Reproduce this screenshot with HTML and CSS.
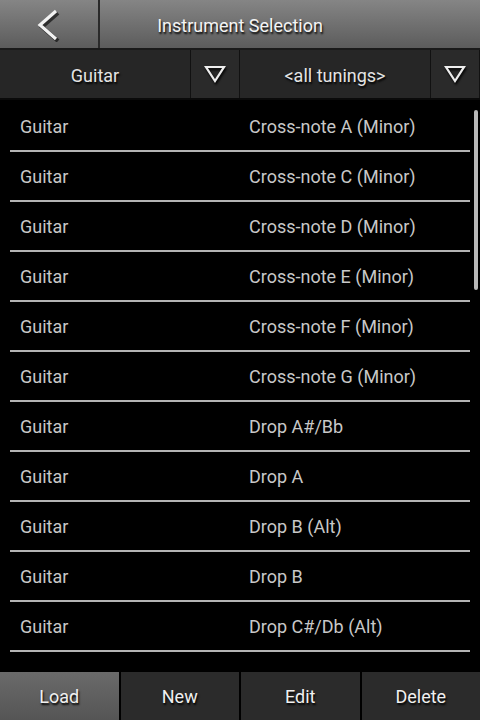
FILE: index.html
```html
<!DOCTYPE html>
<html>

<head>
    <title>Instrument Selection</title>
    <link rel="stylesheet" href="styles.css">
</head>

<body>
    <div class="header">
        <div class="back-btn">
            <svg width="30" height="34" viewBox="0 0 30 34">
                <polyline points="24,3 8,17 24,31" fill="none" stroke="#111" stroke-width="4" transform="translate(2,2)" opacity="0.7"/>
                <polyline points="24,3 8,17 24,31" fill="none" stroke="#f2f2f2" stroke-width="3.2"/>
            </svg>
        </div>
        <div class="title">Instrument Selection</div>
    </div>

    <div class="filters">
        <div class="filter-value">Guitar</div>
        <div class="filter-arrow">
            <svg width="22" height="18" viewBox="0 0 22 18"><polygon points="2,2 20,2 11,16" fill="none" stroke="#eee" stroke-width="2.2" stroke-linejoin="miter"/></svg>
        </div>
        <div class="filter-value">&lt;all tunings&gt;</div>
        <div class="filter-arrow">
            <svg width="22" height="18" viewBox="0 0 22 18"><polygon points="2,2 20,2 11,16" fill="none" stroke="#eee" stroke-width="2.2" stroke-linejoin="miter"/></svg>
        </div>
    </div>

    <div class="list-wrap">
        <ul id="tuning-list" class="tuning-list"></ul>
        <div class="scrollbar"></div>
    </div>

    <div class="toolbar">
        <button class="tool-btn active">Load</button>
        <button class="tool-btn">New</button>
        <button class="tool-btn">Edit</button>
        <button class="tool-btn">Delete</button>
    </div>

    <script>
        const tunings = [
            'Cross-note A (Minor)',
            'Cross-note C (Minor)',
            'Cross-note D (Minor)',
            'Cross-note E (Minor)',
            'Cross-note F (Minor)',
            'Cross-note G (Minor)',
            'Drop A#/Bb',
            'Drop A',
            'Drop B (Alt)',
            'Drop B',
            'Drop C#/Db (Alt)'
        ];
        const tuningList = document.getElementById('tuning-list');
        tunings.forEach(name => {
            const item = document.createElement('li');
            const inst = document.createElement('span');
            inst.className = 'col-inst';
            inst.textContent = 'Guitar';
            const tun = document.createElement('span');
            tun.className = 'col-tuning';
            tun.textContent = name;
            item.appendChild(inst);
            item.appendChild(tun);
            tuningList.appendChild(item);
        });
    </script>
</body>

</html>
```

FILE: styles.css
```css
body {
    background-color: #000;
    font-family: Roboto, "Liberation Sans", sans-serif;
    margin: 0;
    padding: 0;
    width: 480px;
    height: 720px;
    overflow: hidden;
    display: flex;
    flex-direction: column;
}

.header {
    display: flex;
    height: 48px;
    border-bottom: 2px solid #1a1a1a;
    background: linear-gradient(#858585, #5c5c5c);
}

.back-btn {
    width: 98px;
    border-right: 2px solid #2a2a2a;
    display: flex;
    align-items: center;
    justify-content: center;
}

.back-btn svg {
    margin-right: 4px;
    margin-top: 2px;
}

.title {
    flex: 1;
    display: flex;
    align-items: center;
    justify-content: center;
    padding-right: 100px;
    padding-top: 2px;
    color: #f4f4f4;
    font-size: 18px;
    text-shadow: 1px 2px 2px #000;
}

.filters {
    display: flex;
    height: 48px;
    background-color: #262626;
    border-bottom: 2px solid #0a0a0a;
}

.filter-value {
    width: 190px;
    display: flex;
    align-items: center;
    justify-content: center;
    padding-top: 2px;
    color: #e4e4e4;
    font-size: 18px;
    text-shadow: 1px 2px 2px #000;
    border-right: 1px solid #111;
}

.filter-arrow {
    width: 48px;
    display: flex;
    align-items: center;
    justify-content: center;
    border-right: 1px solid #111;
    background-color: #2a2a2a;
}

.filter-arrow svg {
    filter: drop-shadow(1px 2px 1px #000);
}

.list-wrap {
    flex: 1;
    position: relative;
    overflow: hidden;
}

.tuning-list {
    list-style: none;
    margin: 0;
    padding: 2px 10px 0;
}

.tuning-list li {
    display: flex;
    align-items: center;
    height: 48px;
    border-bottom: 2px solid #b4b4b4;
    color: #c8c8c8;
    font-size: 18px;
}

.col-inst {
    width: 229px;
    padding-left: 10px;
}

.scrollbar {
    position: absolute;
    right: 2px;
    top: 10px;
    width: 4px;
    height: 180px;
    border-radius: 2px;
    background-color: #b8b8b8;
}

.toolbar {
    display: flex;
    gap: 2px;
    height: 48px;
    background-color: #000;
}

.tool-btn {
    flex: 1;
    background-color: #2b2b2b;
    border: none;
    color: #f0f0f0;
    font-family: Roboto, "Liberation Sans", sans-serif;
    font-size: 18px;
    text-shadow: 1px 2px 2px #000;
    padding: 0;
}

.tool-btn.active {
    background: linear-gradient(#6a6a6a, #555);
}
```
